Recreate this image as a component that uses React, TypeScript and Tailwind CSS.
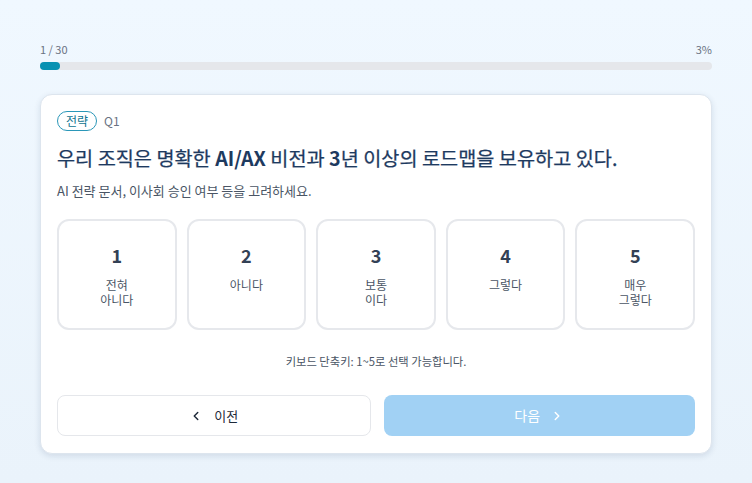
import { ChevronLeft, ChevronRight } from 'lucide-react';

const OPTIONS = [
  { value: 1, label: ['전혀', '아니다'] },
  { value: 2, label: ['아니다'] },
  { value: 3, label: ['보통', '이다'] },
  { value: 4, label: ['그렇다'] },
  { value: 5, label: ['매우', '그렇다'] },
];

export default function App() {
  return (
    <div
      className="min-h-screen bg-gradient-to-b from-[#f0f8ff] to-[#eaf3fb] pt-[41px]"
      style={{ fontFamily: '"Noto Sans CJK KR", "Noto Sans", sans-serif' }}
    >
      <div className="mx-auto w-[672px]">
        {/* progress */}
        <div className="flex items-center justify-between text-[11px] leading-4 text-gray-500">
          <span>1 / 30</span>
          <span>3%</span>
        </div>
        <div className="mt-[5px] h-2 w-full rounded-full bg-[#e5e7eb]">
          <div className="h-2 rounded-full bg-[#0891b2]" style={{ width: '3%' }} />
        </div>

        {/* card */}
        <div className="mt-6 rounded-xl border border-[#dde5ee] bg-white px-4 pt-4 pb-[17px] shadow-[0_2px_6px_rgba(15,40,80,0.12)]">
          <div className="flex items-center gap-[7px]">
            <span className="rounded-full border border-[#2b97b8] px-[8px] text-[12px] leading-[18px] text-[#0e7490]">
              전략
            </span>
            <span className="text-[12px] text-gray-500">Q1</span>
          </div>

          <h1 className="mt-[13px] text-[19.7px] font-normal leading-7 text-[#1e3a5f] [-webkit-text-stroke:0.25px_#1e3a5f]">
            우리 조직은 명확한 <span className="font-bold [-webkit-text-stroke:0]">AI/AX</span> 비전과 <span className="font-bold [-webkit-text-stroke:0]">3</span>년 이상의 로드맵을 보유하고 있다.
          </h1>
          <p className="mt-[9px] text-[13px] leading-5 text-gray-600">
            AI 전략 문서, 이사회 승인 여부 등을 고려하세요.
          </p>

          <div className="mt-[18px] grid grid-cols-5 gap-[10px]">
            {OPTIONS.map(o => (
              <button
                key={o.value}
                className="flex h-[111px] flex-col items-center rounded-xl border-2 border-[#e6e8ec] bg-white pt-[22px]"
              >
                <div className="text-[18px] font-bold leading-6 text-[#334155]">{o.value}</div>
                <div className="mt-[10px]">
                  {o.label.map(l => (
                    <div key={l} className="h-[15px] text-[12px] leading-[15px] text-gray-600">{l}</div>
                  ))}
                </div>
              </button>
            ))}
          </div>

          <p className="mt-[23px] text-center text-[11.3px] leading-4 text-gray-600">
            키보드 단축키: 1~5로 선택 가능합니다.
          </p>

          <div className="mt-[26px] flex gap-[13px]">
            <button className="flex h-[41px] flex-1 items-center justify-center gap-[11px] rounded-lg border border-[#e5e7eb] bg-white text-[13px] text-gray-800">
              <ChevronLeft size={14} strokeWidth={2.5} />
              이전
            </button>
            <button className="flex h-[41px] flex-1 items-center justify-center gap-[10px] rounded-lg bg-[#a1d1f4] text-[14px] text-white">
              다음
              <ChevronRight size={14} strokeWidth={2.5} />
            </button>
          </div>
        </div>
      </div>
    </div>
  );
}
